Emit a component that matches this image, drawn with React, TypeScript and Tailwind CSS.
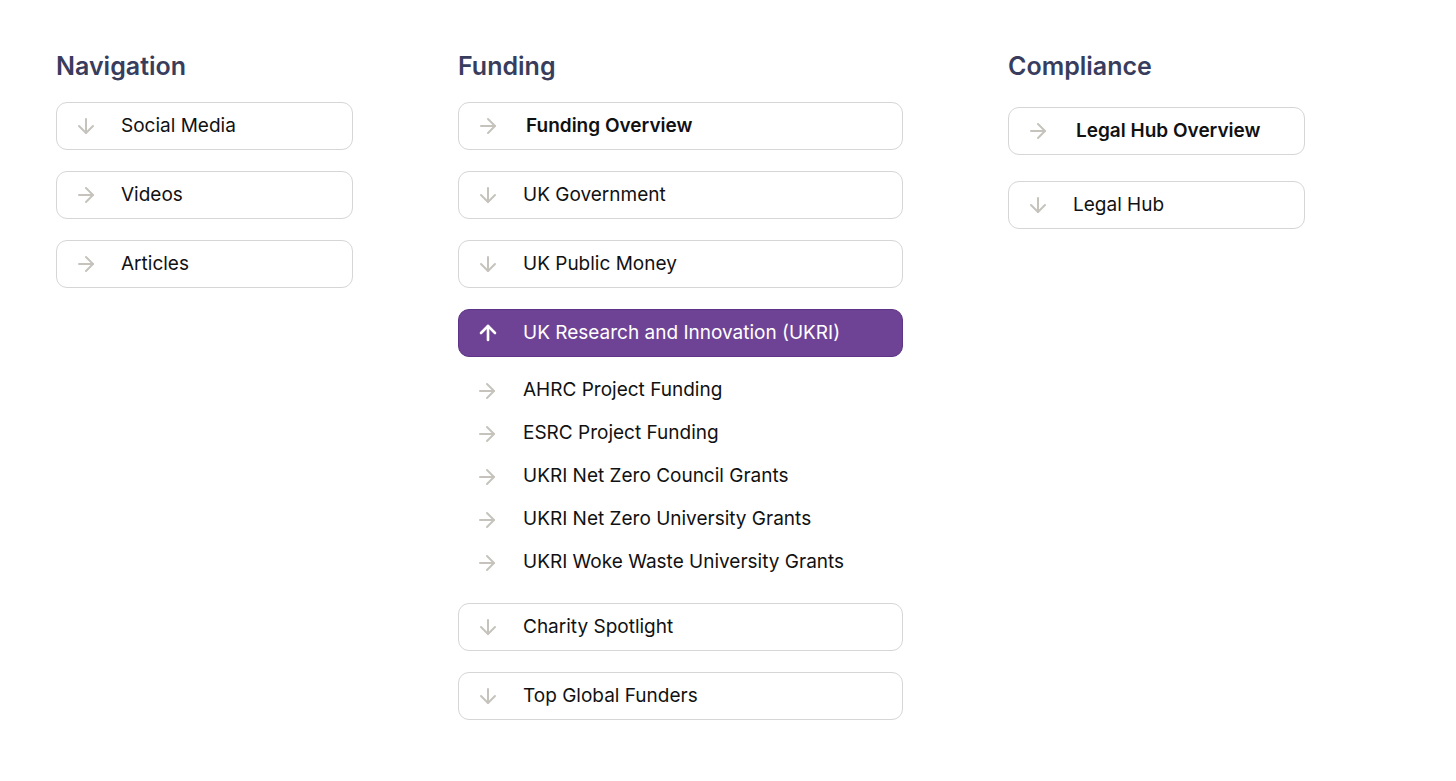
import React from "react";
import { ArrowRight, ArrowDown, ArrowUp } from "lucide-react";

type Item = { label: string; icon: "right" | "down"; bold?: boolean };

function Icon({ kind, white }: { kind: "right" | "down" | "up"; white?: boolean }) {
  const cls = white ? "text-white" : "text-[#c6c3bd]";
  const props = { size: 24, strokeWidth: white ? 2.6 : 2, className: cls };
  if (kind === "right") return <ArrowRight {...props} />;
  if (kind === "down") return <ArrowDown {...props} />;
  return <ArrowUp {...props} />;
}

function Box({ item, first }: { item: Item; first?: boolean }) {
  return (
    <div
      className={`${first ? "" : "mt-[21px]"} h-[48px] flex items-center rounded-[11px] border border-[#d6d6d6] bg-white pl-[17px]`}
    >
      <Icon kind={item.icon} />
      <span
        className={`text-[19px] text-[#111111] ${item.bold ? "font-semibold ml-[26px]" : "ml-[23px]"}`}
      >
        {item.label}
      </span>
    </div>
  );
}

function Heading({ children }: { children: React.ReactNode }) {
  return (
    <h2 className="text-[25px] leading-[32px] font-semibold text-[#383d5e]">
      {children}
    </h2>
  );
}

export default function App() {
  const sub = [
    "AHRC Project Funding",
    "ESRC Project Funding",
    "UKRI Net Zero Council Grants",
    "UKRI Net Zero University Grants",
    "UKRI Woke Waste University Grants",
  ];
  return (
    <div
      className="min-h-[781px] w-full bg-white flex items-start pl-[56px] pt-[50px]"
      style={{ fontFamily: "Inter, 'Noto Sans', sans-serif" }}
    >
      <div className="w-[297px] flex flex-col">
        <Heading>Navigation</Heading>
        <div className="mt-[20px] flex flex-col">
          <Box first item={{ label: "Social Media", icon: "down" }} />
          <Box item={{ label: "Videos", icon: "right" }} />
          <Box item={{ label: "Articles", icon: "right" }} />
        </div>
      </div>

      <div className="ml-[105px] w-[445px] flex flex-col">
        <Heading>Funding</Heading>
        <div className="mt-[20px] flex flex-col">
          <Box first item={{ label: "Funding Overview", icon: "right", bold: true }} />
          <Box item={{ label: "UK Government", icon: "down" }} />
          <Box item={{ label: "UK Public Money", icon: "down" }} />
          <div className="mt-[21px] h-[48px] flex items-center rounded-[11px] border border-[#5e3586] bg-[#6e4396] pl-[17px]">
            <Icon kind="up" white />
            <span className="ml-[23px] text-[19px] text-white">UK Research and Innovation (UKRI)</span>
          </div>
          <div className="mt-[12px] flex flex-col">
            {sub.map((s) => (
              <div key={s} className="h-[43px] flex items-center pl-[17px]">
                <Icon kind="right" />
                <span className="ml-[24px] text-[19px] text-[#111111]">{s}</span>
              </div>
            ))}
          </div>
          <div className="mt-[19px]" />
          <Box first item={{ label: "Charity Spotlight", icon: "down" }} />
          <Box item={{ label: "Top Global Funders", icon: "down" }} />
        </div>
      </div>

      <div className="ml-[105px] w-[297px] flex flex-col">
        <Heading>Compliance</Heading>
        <div className="mt-[25px] flex flex-col">
          <Box first item={{ label: "Legal Hub Overview", icon: "right", bold: true }} />
          <div className="mt-[5px]" />
          <Box item={{ label: "Legal Hub", icon: "down" }} />
        </div>
      </div>
    </div>
  );
}
